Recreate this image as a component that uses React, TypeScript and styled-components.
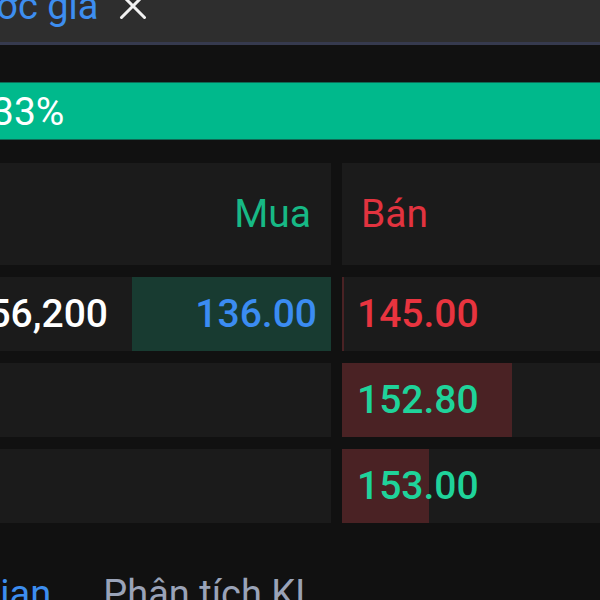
import React from "react";
import styled, { createGlobalStyle } from "styled-components";

const Global = createGlobalStyle`
  html, body { margin: 0; padding: 0; background: #111111; overflow: hidden; }
  body { font-family: Roboto, "Noto Sans", "Liberation Sans", sans-serif; }
  * { box-sizing: border-box; }
`;

const Page = styled.div`
  width: 600px;
  height: 600px;
  overflow: hidden;
  background: #111111;
  display: flex;
  flex-direction: column;
`;

const TabBar = styled.div`
  margin-top: -31px;
  height: 76px;
  background: #2e2e2e;
  border-bottom: 3px solid #363a4e;
  display: flex;
  align-items: center;
  gap: 21px;
  flex-shrink: 0;
`;

const TabLabel = styled.span`
  margin-left: -51px;
  font-size: 38px;
  line-height: 38px;
  color: #3d8ef0;
  white-space: nowrap;
`;

const Close = styled.svg`
  width: 28px;
  height: 28px;
  flex-shrink: 0;
`;

const RatioBar = styled.div`
  margin-top: 37px;
  height: 58px;
  background: #00b98c;
  border-top: 1px solid #0e6a55;
  border-bottom: 1px solid #0e6a55;
  display: flex;
  align-items: center;
  flex-shrink: 0;
`;

const RatioText = styled.span`
  margin-left: -8px;
  margin-top: 2px;
  font-size: 39px;
  line-height: 39px;
  color: #ffffff;
  white-space: nowrap;
`;

const Table = styled.div`
  margin-top: 23px;
  margin-left: -40px;
  width: 640px;
  display: grid;
  grid-template-columns: 371px 1fr;
  grid-auto-rows: 74px;
  grid-template-rows: 102px;
  column-gap: 11px;
  row-gap: 12px;
  flex-shrink: 0;
`;

const HeadCell = styled.div<{ $side: "bid" | "ask" }>`
  background: #1b1b1b;
  display: flex;
  align-items: center;
  justify-content: ${(p) => (p.$side === "bid" ? "flex-end" : "flex-start")};
  padding: ${(p) => (p.$side === "bid" ? "0 20px 0 0" : "0 0 0 19px")};
  font-size: 39px;
  color: ${(p) => (p.$side === "bid" ? "#17b985" : "#e2333f")};
`;

const BidRow = styled.div`
  background: #1b1b1b;
  display: grid;
  grid-template-columns: 1fr 199px;
  column-gap: 10px;
`;

const Volume = styled.div`
  display: flex;
  align-items: center;
  justify-content: flex-end;
  padding-right: 14px;
  font-size: 39px;
  font-weight: 500;
  color: #ffffff;
  white-space: nowrap;
`;

const PriceCell = styled.div<{ $side: "bid" | "ask"; $empty?: boolean }>`
  position: relative;
  display: flex;
  align-items: center;
  justify-content: ${(p) => (p.$side === "bid" ? "flex-end" : "flex-start")};
  padding: ${(p) => (p.$side === "bid" ? "0 14px 0 0" : "0 0 0 15px")};
  background: ${(p) => (p.$empty ? "transparent" : "#1b1b1b")};
`;

const VolBar = styled.div<{ $side: "bid" | "ask" }>`
  position: absolute;
  top: 0;
  bottom: 0;
  ${(p) => (p.$side === "bid" ? "right: 0;" : "left: 0;")}
  background: ${(p) => (p.$side === "bid" ? "#183b31" : "#4a2224")};
`;

const Price = styled.span<{ $tone: "up" | "down" | "ref" }>`
  position: relative;
  font-size: 39px;
  font-weight: 500;
  color: ${(p) =>
    p.$tone === "up" ? "#1fd39a" : p.$tone === "down" ? "#e8343f" : "#3b8cf2"};
`;

const BottomTabs = styled.div`
  margin-top: 52px;
  display: flex;
  gap: 52px;
  font-size: 38px;
  line-height: 38px;
  white-space: nowrap;
  flex-shrink: 0;
`;

const BottomTab = styled.span<{ $active?: boolean; $offset?: number }>`
  color: ${(p) => (p.$active ? "#3d8ef0" : "#9aa3b8")};
  margin-left: ${(p) => (p.$offset ? `${p.$offset}px` : "0")};
`;

type Level = {
  vol?: string;
  bid?: string;
  bidTone?: "up" | "down" | "ref";
  bidBar?: number;
  ask: string;
  askTone: "up" | "down" | "ref";
  askBar: number;
};

const levels: Level[] = [
  { vol: "56,200", bid: "136.00", bidTone: "ref", bidBar: 100, ask: "145.00", askTone: "down", askBar: 2 },
  { ask: "152.80", askTone: "up", askBar: 170 },
  { ask: "153.00", askTone: "up", askBar: 87 },
];

export default function App() {
  return (
    <>
      <Global />
      <Page>
        <TabBar>
          <TabLabel>Bước giá</TabLabel>
          <Close viewBox="0 0 28 28">
            <path d="M2.5 2.5 L25.5 25.5 M25.5 2.5 L2.5 25.5" stroke="#f2f2f2" strokeWidth="3" strokeLinecap="round" />
          </Close>
        </TabBar>
        <RatioBar>
          <RatioText>33%</RatioText>
        </RatioBar>
        <Table>
          <HeadCell $side="bid">Mua</HeadCell>
          <HeadCell $side="ask">Bán</HeadCell>
          {levels.map((l, i) => (
            <React.Fragment key={i}>
              <BidRow>
                <Volume>{l.vol ?? ""}</Volume>
                <PriceCell $side="bid" $empty={!l.bid}>
                  {l.bid && <VolBar $side="bid" style={{ width: `${l.bidBar}%` }} />}
                  {l.bid && <Price $tone={l.bidTone ?? "ref"}>{l.bid}</Price>}
                </PriceCell>
              </BidRow>
              <PriceCell $side="ask">
                <VolBar $side="ask" style={{ width: `${l.askBar}px` }} />
                <Price $tone={l.askTone}>{l.ask}</Price>
              </PriceCell>
            </React.Fragment>
          ))}
        </Table>
        <BottomTabs>
          <BottomTab $active $offset={-105}>Thời gian</BottomTab>
          <BottomTab>Phân tích KL</BottomTab>
        </BottomTabs>
      </Page>
    </>
  );
}
